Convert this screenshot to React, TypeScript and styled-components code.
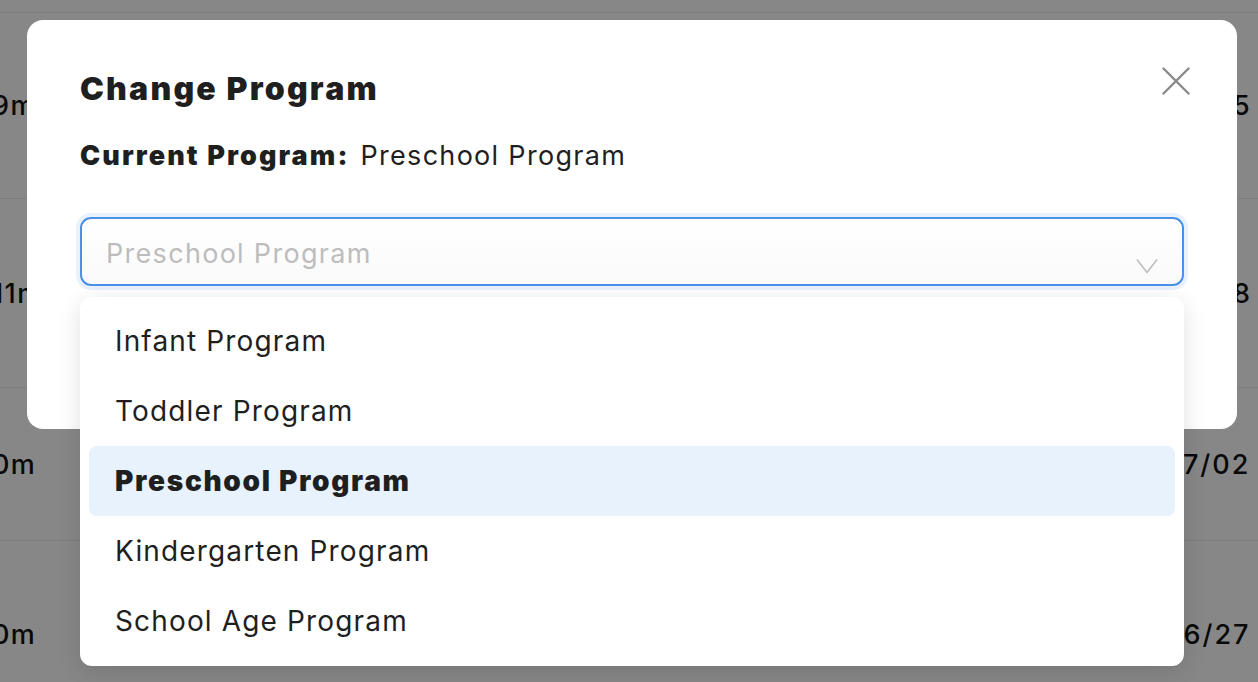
import styled, { createGlobalStyle } from 'styled-components';

const GlobalStyle = createGlobalStyle`
  html, body {
    margin: 0;
    padding: 0;
    height: 100%;
    overflow: hidden;
  }
  body {
    font-family: Inter, Lato, 'Noto Sans', sans-serif;
    background: #ffffff;
    color: #1c1c1c;
  }
`;

const programs = [
  'Infant Program',
  'Toddler Program',
  'Preschool Program',
  'Kindergarten Program',
  'School Age Program',
];

const rows = [
  { time: '9m', date: '06/25', height: 185 },
  { time: '11m', date: '06/28', height: 188 },
  { time: '0m', date: '07/02', height: 152 },
  { time: '0m', date: '06/27', height: 186 },
];

const App = () => {
  const current = 'Preschool Program';

  return (
    <>
      <GlobalStyle />
      <Page>
        <Table>
          <HeaderRow />
          {rows.map((row) => (
            <Row key={row.date} style={{ height: row.height }}>
              <TimeCell>{row.time}</TimeCell>
              <span />
              <DateCell>{row.date}</DateCell>
            </Row>
          ))}
        </Table>
        <Overlay />
        <Modal>
          <CloseButton type="button" aria-label="Close">
            <svg width="28" height="28" viewBox="0 0 28 28">
              <path
                d="M1.5 1.5 L26.5 26.5 M26.5 1.5 L1.5 26.5"
                stroke="#8a8a8a"
                strokeWidth="2.4"
                strokeLinecap="round"
              />
            </svg>
          </CloseButton>
          <Title>Change Program</Title>
          <Current>
            <strong>Current Program:</strong> {current}
          </Current>
          <SelectWrap>
            <SelectBox>
              <Placeholder>{current}</Placeholder>
              <Chevron viewBox="0 0 22 16" width="22" height="16">
                <path
                  d="M1 1.5 L11 14.5 L21 1.5"
                  fill="none"
                  stroke="#bdbdbd"
                  strokeWidth="1.6"
                />
              </Chevron>
            </SelectBox>
            <Menu>
              {programs.map((p) => (
                <Option key={p} $active={p === current}>
                  {p}
                </Option>
              ))}
            </Menu>
          </SelectWrap>
        </Modal>
      </Page>
    </>
  );
};
export default App;

const Page = styled.div`
  position: relative;
  width: 100vw;
  height: 100vh;
  overflow: hidden;
`;

const Table = styled.div`
  display: flex;
  flex-direction: column;
`;

const HeaderRow = styled.div`
  height: 12px;
  border-bottom: 1px solid #ececec;
`;

const Row = styled.div`
  display: grid;
  grid-template-columns: 60px 1fr 94px;
  align-items: center;
  border-bottom: 1px solid #ececec;
  font-size: 27px;
  font-weight: 500;
  letter-spacing: 1.4px;
  color: #111;
`;

const TimeCell = styled.span`
  white-space: nowrap;
  margin-left: -8px;
`;

const DateCell = styled.span`
  white-space: nowrap;
  letter-spacing: 2px;
`;

const Overlay = styled.div`
  position: absolute;
  inset: 0;
  background: rgba(0, 0, 0, 0.47);
`;

const Modal = styled.div`
  position: absolute;
  top: 20px;
  left: 27px;
  width: 1210px;
  height: 409px;
  box-sizing: border-box;
  padding: 50px 53px 0;
  background: #ffffff;
  border-radius: 16px;
`;

const CloseButton = styled.button`
  position: absolute;
  top: 47px;
  right: 47px;
  padding: 0;
  border: 0;
  background: none;
  display: flex;
  cursor: pointer;
`;

const Title = styled.h2`
  margin: 0;
  font-size: 32px;
  line-height: 38px;
  font-weight: 900;
  letter-spacing: 2.2px;
  color: #1f1f1f;
`;

const Current = styled.p`
  margin: 32px 0 0;
  font-size: 27px;
  line-height: 32px;
  letter-spacing: 1.3px;
  color: #1f1f1f;
  strong {
    font-weight: 900;
    letter-spacing: 2.1px;
    margin-right: 2px;
  }
`;

const SelectWrap = styled.div`
  position: relative;
  margin-top: 45px;
`;

const SelectBox = styled.div`
  height: 69px;
  box-sizing: border-box;
  display: flex;
  align-items: center;
  justify-content: space-between;
  padding: 0 24px 0 24px;
  border: 2px solid #4a8fe8;
  border-radius: 11px;
  box-shadow: 0 0 0 4px #e8f1fc;
  background: linear-gradient(#ffffff, #fafafa);
`;

const Placeholder = styled.span`
  font-size: 27px;
  letter-spacing: 1.3px;
  color: #bdbdbd;
  padding-top: 4px;
`;

const Chevron = styled.svg`
  align-self: flex-end;
  margin-bottom: 10px;
`;

const Menu = styled.ul`
  position: absolute;
  top: 80px;
  left: 0;
  right: 0;
  margin: 0;
  padding: 9px 9px 10px;
  list-style: none;
  background: #ffffff;
  border-radius: 12px;
  box-shadow: 0 6px 24px rgba(0, 0, 0, 0.12);
`;

const Option = styled.li<{ $active?: boolean }>`
  height: 70px;
  display: flex;
  align-items: center;
  padding-left: 26px;
  border-radius: 8px;
  font-size: 28px;
  color: #1f1f1f;
  font-weight: ${({ $active }) => ($active ? 900 : 400)};
  letter-spacing: ${({ $active }) => ($active ? '1.7px' : '1.15px')};
  background: ${({ $active }) => ($active ? '#e8f2fd' : 'transparent')};
`;
